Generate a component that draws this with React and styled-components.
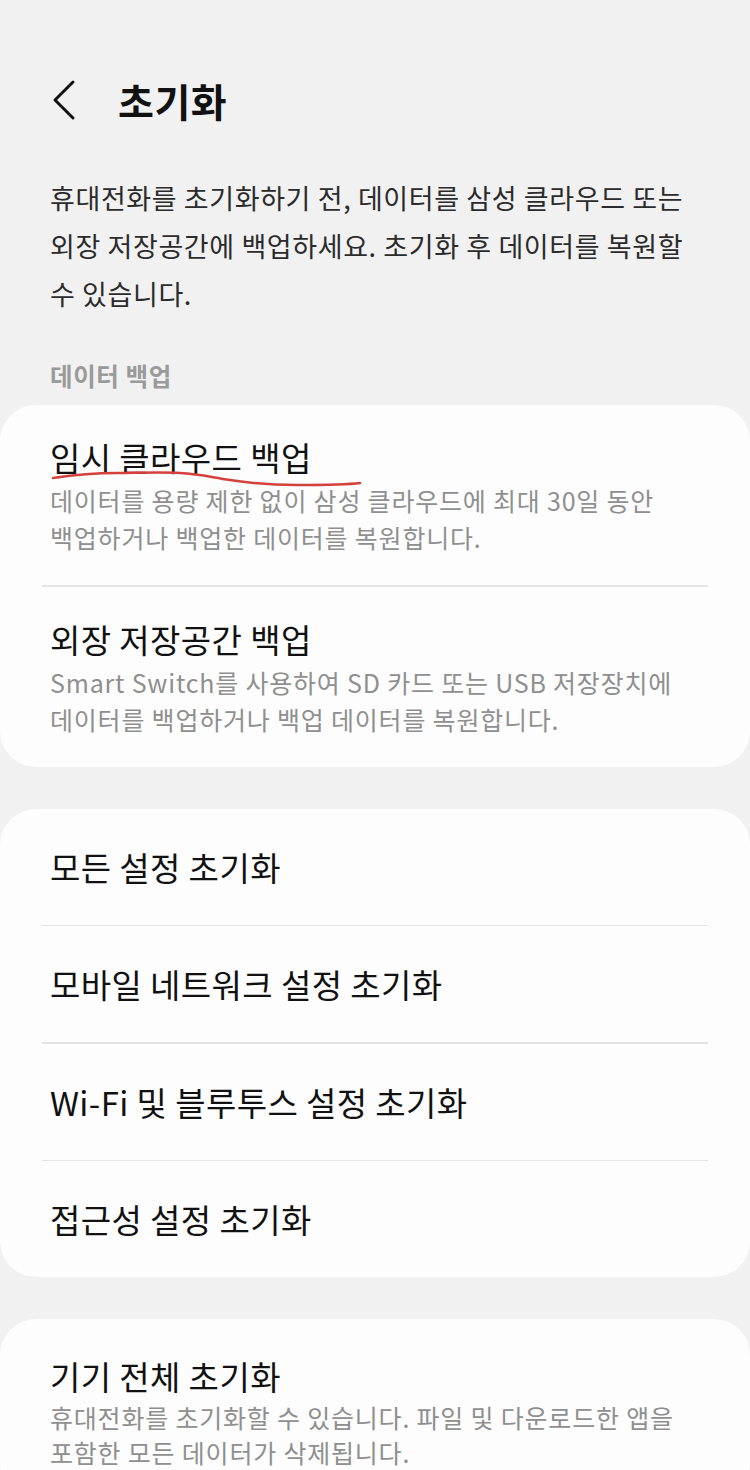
import React from "react";
import styled, { createGlobalStyle } from "styled-components";

const Global = createGlobalStyle`
  html, body {
    margin: 0;
    padding: 0;
    background: #f1f1f1;
  }
  body {
    font-family: "Noto Sans CJK KR", "Noto Sans", sans-serif;
    -webkit-font-smoothing: antialiased;
  }
`;

const Page = styled.div`
  width: 750px;
  height: 1470px;
  background: #f1f1f1;
  overflow: hidden;
`;

const Header = styled.header`
  display: flex;
  align-items: center;
  height: 60px;
  padding: 70px 0 0 50px;
  gap: 40px;
`;

const BackButton = styled.button`
  display: flex;
  align-items: center;
  justify-content: center;
  width: 28px;
  height: 44px;
  padding: 0;
  border: none;
  background: none;
`;

const Title = styled.h1`
  margin: 0;
  font-size: 39px;
  font-weight: 700;
  color: #111;
  line-height: 60px;
  letter-spacing: 0.5px;
`;

const Description = styled.p`
  margin: 44px 0 0;
  padding: 0 50px;
  font-size: 27px;
  line-height: 48px;
  letter-spacing: 0.6px;
  color: #2b2b2b;
  white-space: nowrap;
`;

const SectionLabel = styled.div`
  margin: 43px 0 14px;
  padding: 0 50px;
  font-size: 24.5px;
  line-height: 30px;
  font-weight: 700;
  letter-spacing: 0.6px;
  color: #9a9a9a;
`;

const Card = styled.section`
  background: #fdfdfd;
  border-radius: 36px;
  margin-bottom: 42px;
  display: flex;
  flex-direction: column;
`;

const Item = styled.div`
  position: relative;
  padding: ${(p) => p.$top || 32}px 50px 29px;
  display: flex;
  flex-direction: column;
  gap: ${(p) => p.$gap ?? 5}px;
`;

const Row = styled.div`
  height: 116px;
  display: flex;
  align-items: center;
  padding: 0 50px;
`;

const ItemTitle = styled.div`
  font-size: 33px;
  line-height: 40px;
  letter-spacing: 0.4px;
  color: #111;
  white-space: nowrap;
`;

const ItemSub = styled.div`
  font-size: 25px;
  line-height: ${(p) => p.$lh || 37}px;
  letter-spacing: 0.8px;
  color: #8f8f8f;
  white-space: nowrap;
`;

const Divider = styled.div`
  height: 1.5px;
  margin: 0 42px;
  background: #e4e4e4;
`;

const Squiggle = styled.svg`
  position: absolute;
  left: 50px;
  top: 60px;
  width: 315px;
  height: 30px;
  pointer-events: none;
`;

const Chevron = () => (
  <svg width="28" height="44" viewBox="0 0 28 44" fill="none">
    <path
      d="M23 4 L5 22 L23 40"
      stroke="#111"
      strokeWidth="3"
      strokeLinecap="round"
      strokeLinejoin="round"
    />
  </svg>
);

const resetRows = [
  "모든 설정 초기화",
  "모바일 네트워크 설정 초기화",
  "Wi-Fi 및 블루투스 설정 초기화",
  "접근성 설정 초기화",
];

export default function App() {
  return (
    <Page>
      <Global />
      <Header>
        <BackButton aria-label="뒤로">
          <Chevron />
        </BackButton>
        <Title>초기화</Title>
      </Header>
      <Description>
        휴대전화를 초기화하기 전, 데이터를 삼성 클라우드 또는
        <br />
        외장 저장공간에 백업하세요. 초기화 후 데이터를 복원할
        <br />
        수 있습니다.
      </Description>
      <SectionLabel>데이터 백업</SectionLabel>
      <Card>
        <Item>
          <ItemTitle>임시 클라우드 백업</ItemTitle>
          <ItemSub>
            데이터를 용량 제한 없이 삼성 클라우드에 최대 30일 동안
            <br />
            백업하거나 백업한 데이터를 복원합니다.
          </ItemSub>
          <Squiggle viewBox="0 0 315 30">
            <path
              d="M3 13 C 30 9, 50 8, 67 8 S 110 7, 130 8 S 160 12, 180 15 S 225 20, 247 20 S 295 20, 310 18"
              stroke="#d4413c"
              strokeWidth="2.5"
              fill="none"
              strokeLinecap="round"
            />
          </Squiggle>
        </Item>
        <Divider />
        <Item>
          <ItemTitle>외장 저장공간 백업</ItemTitle>
          <ItemSub>
            Smart Switch를 사용하여 SD 카드 또는 USB 저장장치에
            <br />
            데이터를 백업하거나 백업 데이터를 복원합니다.
          </ItemSub>
        </Item>
      </Card>
      <Card>
        {resetRows.map((label, i) => (
          <React.Fragment key={label}>
            {i > 0 && <Divider />}
            <Row>
              <ItemTitle>{label}</ItemTitle>
            </Row>
          </React.Fragment>
        ))}
      </Card>
      <Card>
        <Item $top={37} $gap={4}>
          <ItemTitle>기기 전체 초기화</ItemTitle>
          <ItemSub $lh={35}>
            휴대전화를 초기화할 수 있습니다. 파일 및 다운로드한 앱을
            <br />
            포함한 모든 데이터가 삭제됩니다.
          </ItemSub>
        </Item>
      </Card>
    </Page>
  );
}
